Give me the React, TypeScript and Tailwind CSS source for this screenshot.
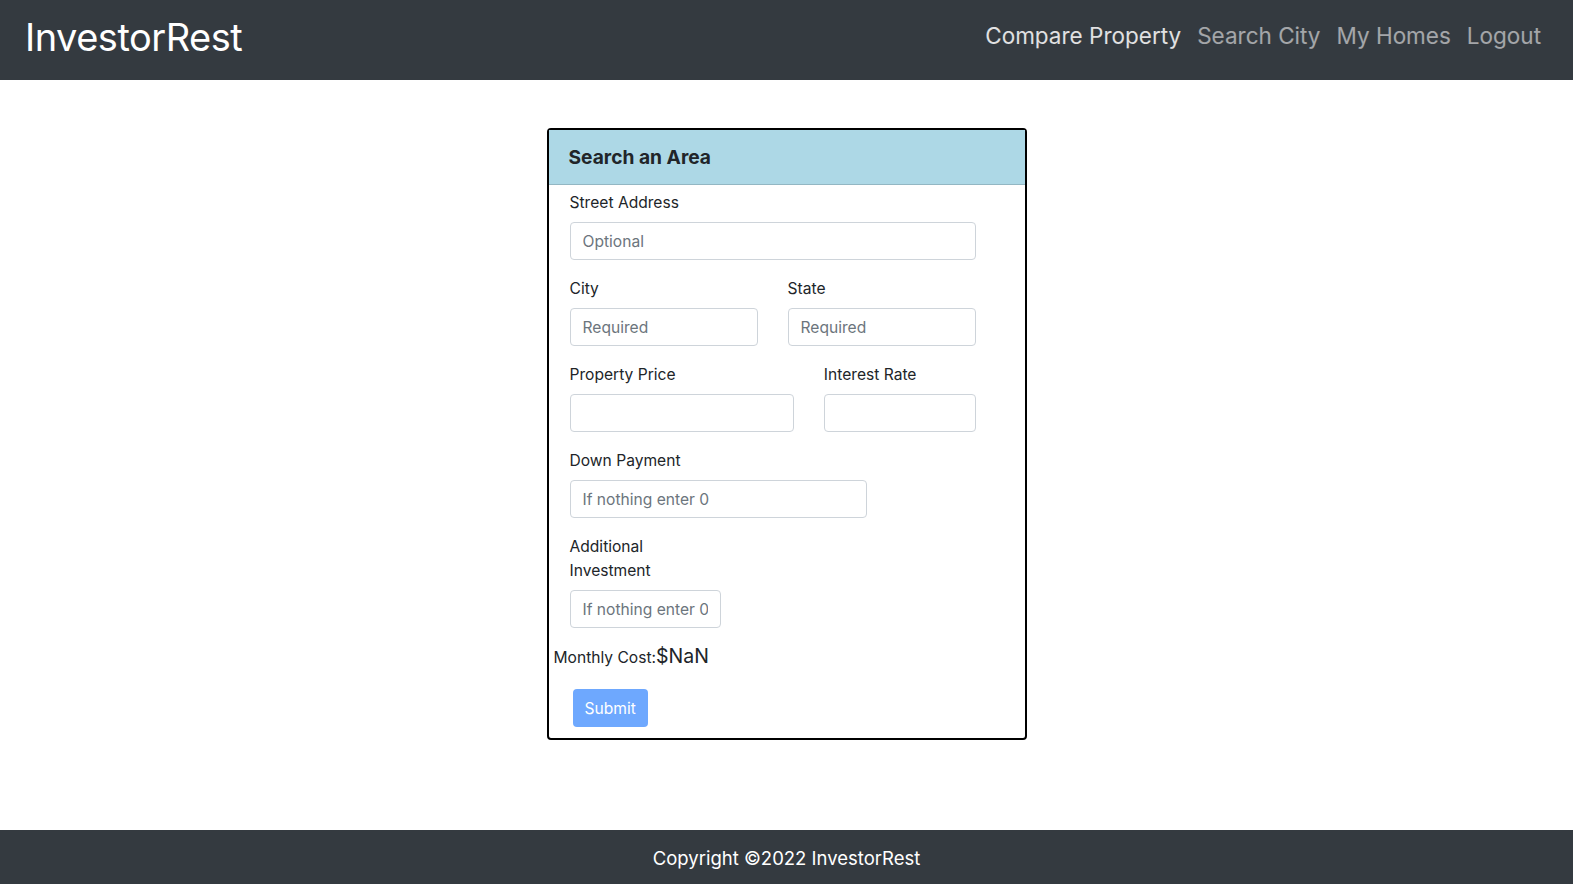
const font = { fontFamily: '"Inter", "Liberation Sans", sans-serif' };

const Field = ({ label, span, placeholder }: { label: string; span: string; placeholder?: string }) => (
  <div className={`${span} flex flex-col mb-4`}>
    <label className="text-[15.6px] leading-6 pt-px mb-[7px] text-[#212529]">{label}</label>
    <input
      className="h-[38px] w-full rounded border border-[#ced4da] px-3 text-[15.6px] text-[#212529] placeholder:text-[#6c757d] outline-none"
      placeholder={placeholder}
    />
  </div>
);

export default function App() {
  return (
    <div className="h-screen flex flex-col bg-white" style={font}>
      <nav className="h-20 shrink-0 bg-[#343a40] flex items-center justify-between pl-[25px] pr-6 pb-[7px]">
        <a className="text-[38px] leading-none text-white tracking-[-0.5px]">InvestorRest</a>
        <ul className="flex items-center text-[22.5px] leading-none">
          <li className="px-2 text-white/85">Compare Property</li>
          <li className="px-2 text-white/55">Search City</li>
          <li className="px-2 text-white/55">My Homes</li>
          <li className="px-2 text-white/55">Logout</li>
        </ul>
      </nav>

      <main className="flex-1 flex justify-center pt-12">
        <div className="w-[480px] h-fit border-2 border-black rounded">
          <div className="h-[55px] bg-[#add8e6] border-b border-black/15 flex items-center px-5">
            <h5 className="text-[19.2px] font-bold text-[#212529]">Search an Area</h5>
          </div>
          <div className="pt-[5px] pb-[11px]">
            <form className="ml-[21px] w-[406px] grid grid-cols-12 gap-x-[30px]">
              <Field label="Street Address" span="col-span-12" placeholder="Optional" />
              <Field label="City" span="col-span-6" placeholder="Required" />
              <Field label="State" span="col-span-6" placeholder="Required" />
              <Field label="Property Price" span="col-span-7" />
              <Field label="Interest Rate" span="col-span-5" />
              <Field label="Down Payment" span="col-span-9" placeholder="If nothing enter 0" />
              <div className="col-span-3" />
              <Field label="Additional Investment" span="col-span-5" placeholder="If nothing enter 0" />
            </form>
            <div className="ml-[5px] -mt-[2px] flex items-baseline text-[#212529]">
              <span className="text-[15.6px]">Monthly Cost:</span>
              <span className="text-[19.5px]">$NaN</span>
            </div>
            <button className="mt-[18px] ml-6 h-[38px] px-3 rounded bg-[#6ea8fe] text-white text-[15.6px]">
              Submit
            </button>
          </div>
        </div>
      </main>

      <footer className="h-[54px] shrink-0 bg-[#343a40] flex items-center justify-center pt-1 text-[18.5px] text-white">
        Copyright ©2022 InvestorRest
      </footer>
    </div>
  );
}
